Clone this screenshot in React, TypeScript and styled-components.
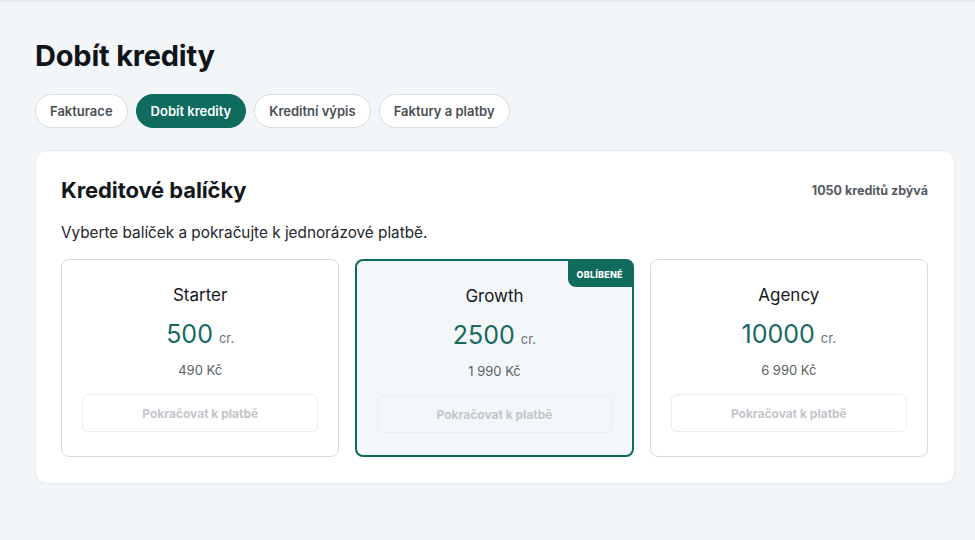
import styled, { createGlobalStyle } from "styled-components";

const GlobalStyle = createGlobalStyle`
  html, body {
    margin: 0;
    padding: 0;
    background: #f3f6f9;
    font-family: Inter, "Noto Sans", "Liberation Sans", sans-serif;
    color: #111;
  }
`;

const Page = styled.div`
  min-height: 540px;
  box-sizing: border-box;
  border-top: 2px solid #e6eaee;
  padding: 36px 20px 0 35px;
`;

const Title = styled.h1`
  margin: 0;
  font-size: 29px;
  font-weight: 700;
  letter-spacing: -0.2px;
  color: #111418;
  line-height: 36px;
`;

const Tabs = styled.div`
  display: flex;
  gap: 8px;
  margin-top: 20px;
`;

const Tab = styled.button<{ $active?: boolean }>`
  height: 34px;
  padding: 0 14px;
  border-radius: 17px;
  border: 1px solid ${({ $active }) => ($active ? "#0e6b5e" : "#d8dde2")};
  background: ${({ $active }) => ($active ? "#0e6b5e" : "#fff")};
  color: ${({ $active }) => ($active ? "#fff" : "#4a4f55")};
  font-family: inherit;
  font-size: 13px;
  font-weight: 600;
  cursor: pointer;
`;

const Card = styled.section`
  margin-top: 22px;
  background: #fff;
  border: 1px solid #e8ecef;
  border-radius: 12px;
  padding: 26px 26px 26px 25px;
  box-shadow: 0 1px 2px rgba(0, 0, 0, 0.03);
`;

const CardHeader = styled.div`
  display: flex;
  justify-content: space-between;
  align-items: center;
`;

const CardTitle = styled.h2`
  margin: 0;
  font-size: 22px;
  font-weight: 700;
  color: #15181b;
  letter-spacing: -0.1px;
`;

const Remaining = styled.span`
  font-size: 12.5px;
  font-weight: 700;
  color: #555a5f;
`;

const Subtitle = styled.p`
  margin: 20px 0 17px;
  font-size: 15.3px;
  color: #23262a;
`;

const Grid = styled.div`
  display: grid;
  grid-template-columns: 1fr 1fr 1fr;
  gap: 16px;
`;

const Package = styled.div<{ $featured?: boolean }>`
  position: relative;
  box-sizing: border-box;
  height: 198px;
  border-radius: 8px;
  border: ${({ $featured }) => ($featured ? "2px solid #0e6b5e" : "1px solid #d6dade")};
  background: ${({ $featured }) => ($featured ? "#f3f7f9" : "#fff")};
  padding: 24px 20px 0;
  display: flex;
  flex-direction: column;
  align-items: center;
`;

const Badge = styled.span`
  position: absolute;
  top: 0;
  right: 0;
  background: #0e6b5e;
  color: #fff;
  font-size: 9px;
  font-weight: 800;
  letter-spacing: 0.2px;
  padding: 8px 9px 7px;
  border-bottom-left-radius: 8px;
  border-top-right-radius: 4px;
`;

const Name = styled.div`
  font-size: 17px;
  font-weight: 400;
  color: #15181b;
  line-height: 22px;
`;

const Amount = styled.div`
  margin-top: 13px;
  display: flex;
  align-items: baseline;
  gap: 6px;
  line-height: 30px;
`;

const Credits = styled.span`
  font-size: 25px;
  font-weight: 400;
  color: #17695f;
`;

const Unit = styled.span`
  font-size: 13px;
  color: #6b7075;
`;

const Price = styled.div`
  margin-top: 9px;
  font-size: 13px;
  color: #5a5f64;
  line-height: 16px;
`;

const PayButton = styled.button`
  margin-top: 16px;
  width: 100%;
  height: 38px;
  border: 1px solid #eaedf0;
  border-radius: 6px;
  background: transparent;
  color: #c3c6ca;
  font-family: inherit;
  font-size: 12px;
  font-weight: 700;
`;

const packages = [
  { name: "Starter", credits: "500", price: "490 Kč" },
  { name: "Growth", credits: "2500", price: "1 990 Kč", featured: true },
  { name: "Agency", credits: "10000", price: "6 990 Kč" },
];

const tabs = ["Fakturace", "Dobít kredity", "Kreditní výpis", "Faktury a platby"];

export default function App() {
  return (
    <>
      <GlobalStyle />
      <Page>
        <Title>Dobít kredity</Title>
        <Tabs>
          {tabs.map((t) => (
            <Tab key={t} $active={t === "Dobít kredity"}>
              {t}
            </Tab>
          ))}
        </Tabs>
        <Card>
          <CardHeader>
            <CardTitle>Kreditové balíčky</CardTitle>
            <Remaining>1050 kreditů zbývá</Remaining>
          </CardHeader>
          <Subtitle>Vyberte balíček a pokračujte k jednorázové platbě.</Subtitle>
          <Grid>
            {packages.map((p) => (
              <Package key={p.name} $featured={p.featured}>
                {p.featured && <Badge>OBLÍBENÉ</Badge>}
                <Name>{p.name}</Name>
                <Amount>
                  <Credits>{p.credits}</Credits>
                  <Unit>cr.</Unit>
                </Amount>
                <Price>{p.price}</Price>
                <PayButton disabled>Pokračovat k platbě</PayButton>
              </Package>
            ))}
          </Grid>
        </Card>
      </Page>
    </>
  );
}
